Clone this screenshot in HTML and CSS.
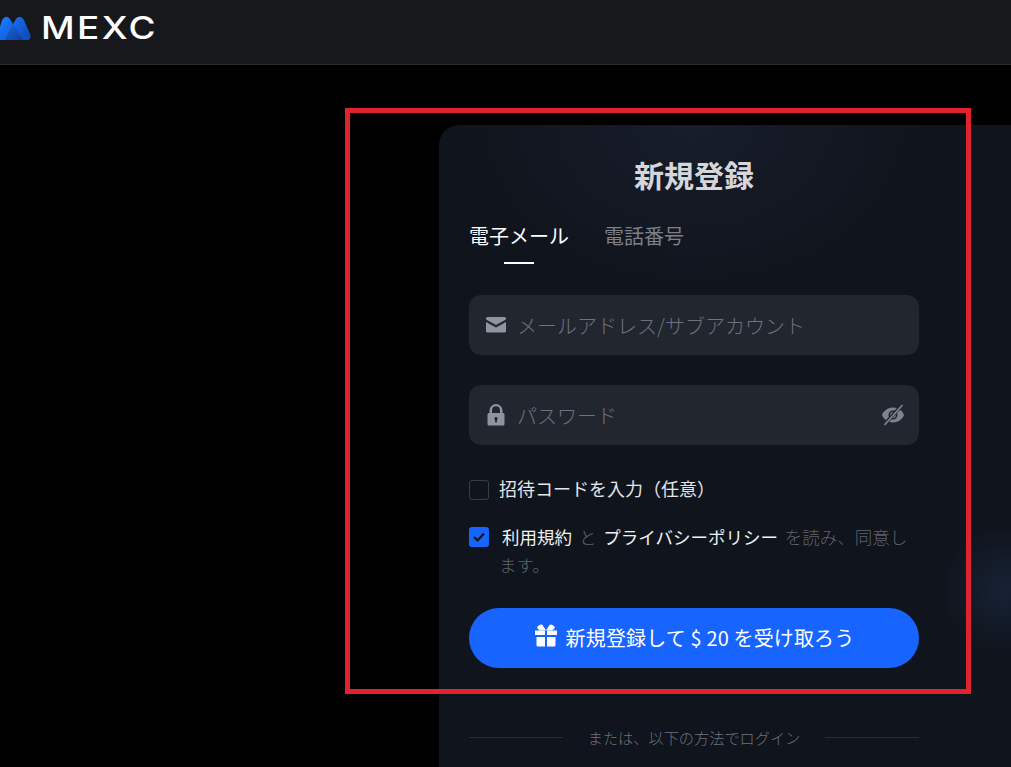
FILE: index.html
```html
<!DOCTYPE html>
<html lang="ja">
<head>
<meta charset="utf-8">
<title>MEXC 新規登録</title>
<link rel="stylesheet" href="styles.css">
</head>
<body>
<header class="topbar">
  <svg class="logo-mark" width="32" height="26" viewBox="0 0 32 26" aria-hidden="true">
    <defs>
      <linearGradient id="lg1" x1="0" y1="0" x2="1" y2="0.6"><stop offset="0" stop-color="#1a86ff"/><stop offset="0.5" stop-color="#1668ea"/><stop offset="1" stop-color="#0f4fc0"/></linearGradient>
      <linearGradient id="lg2" x1="0" y1="0" x2="1" y2="1"><stop offset="0" stop-color="#1a66e0"/><stop offset="1" stop-color="#0c3f9e"/></linearGradient>
    </defs>
    <path d="M-3 25 L3 5 Q7 -1 11 4 L14 9 L17 4 Q21 -1 25 5 L31 19 Q33 25 27 25 Z" fill="url(#lg1)"/>
    <path d="M6 25 L14 9 L24 25 Z" fill="url(#lg2)"/>
  </svg>
  <span class="wordmark">MEXC</span>
</header>

<main class="stage">
  <section class="card">
    <div class="form">
      <h1 class="title">新規登録</h1>
      <nav class="tabs">
        <span class="tab tab-active">電子メール</span>
        <span class="tab">電話番号</span>
      </nav>

      <div class="field field-first">
        <svg class="field-icon" width="20" height="16" viewBox="0 0 20 16" aria-hidden="true">
          <path d="M1.500 0 H18.500 Q20 0 20 1.500 V2.600 L10 8 L0 2.600 V1.500 Q0 0 1.500 0 Z" fill="#8e94a1"/>
          <path d="M0 5 L10 10.400 L20 5 V14 Q20 15.500 18.500 15.500 H1.500 Q0 15.500 0 14 Z" fill="#8e94a1"/>
        </svg>
        <span class="placeholder">メールアドレス/サブアカウント</span>
      </div>

      <div class="field">
        <svg class="field-icon" width="20" height="22" viewBox="0 0 20 22" aria-hidden="true">
          <path fill-rule="evenodd" fill="#8e94a1" d="M3.500 9 V6.500 A6.500 6.500 0 0 1 16.500 6.500 V9 H17 Q18.500 9 18.500 10.500 V20 Q18.500 21.500 17 21.500 H3 Q1.500 21.500 1.500 20 V10.500 Q1.500 9 3 9 Z M6 9 H14 V6.500 A4 4.200 0 0 0 6 6.500 Z M10 13 A1.700 1.700 0 0 0 9.100 16.100 V18.500 H10.900 V16.100 A1.700 1.700 0 0 0 10 13 Z"/>
        </svg>
        <span class="placeholder">パスワード</span>
        <svg class="eye" width="24" height="22" viewBox="0 0 24 22" aria-hidden="true">
          <path fill="#7d838f" d="M12 3.500 C18 3.500 22 8 23 11 C22 14 18 18.500 12 18.500 C6 18.500 2 14 1 11 C2 8 6 3.500 12 3.500 Z"/>
          <circle cx="12" cy="11" r="3.700" fill="none" stroke="#22262f" stroke-width="1.600"/>
          <path d="M3 21 L21 1" stroke="#22262f" stroke-width="3.600"/>
          <path d="M3.500 21 L21.500 1" stroke="#7d838f" stroke-width="1.800"/>
        </svg>
      </div>

      <label class="check-row invite">
        <span class="box"></span>
        <span class="invite-text">招待コードを入力（任意）</span>
      </label>

      <div class="check-row agree">
        <span class="box box-on">
          <svg width="14" height="12" viewBox="0 0 14 12" aria-hidden="true"><path d="M2 6 L5.500 9.500 L12 2.500" fill="none" stroke="#10141c" stroke-width="2.200"/></svg>
        </span>
        <p class="agree-text"><b class="term term-first">利用規約</b> <span>と</span> <b class="term">プライバシーポリシー</b> <span>を読み、同意し</span><br><span>ます。</span></p>
      </div>

      <button class="submit" type="button">
        <svg class="gift" width="24" height="23" viewBox="0 0 24 23" aria-hidden="true">
          <path fill="#fff" d="M1 6.500 H11 V11 H1 Z M13 6.500 H23 V11 H13 Z M2.500 13 H11 V22.500 H4 Q2.500 22.500 2.500 21 Z M13 13 H21.500 V21 Q21.500 22.500 20 22.500 H13 Z"/>
          <path fill="#fff" d="M12 6.500 L8.500 1 Q7.500 0 6 0.700 L3.500 2.500 Q3 3.500 3.500 4.500 L6 6.500 Z M12 6.500 L15.500 1 Q16.500 0 18 0.700 L20.500 2.500 Q21 3.500 20.500 4.500 L18 6.500 Z"/>
        </svg>
        <span class="submit-label">新規登録して $ 20 を受け取ろう</span>
      </button>

      <div class="divider">
        <span class="rule"></span>
        <span class="divider-text">または、以下の方法でログイン</span>
        <span class="rule"></span>
      </div>
    </div>
    <div class="glow"></div>
  </section>
</main>

<div class="highlight"></div>
</body>
</html>
```

FILE: styles.css
```css
* { box-sizing: border-box; }

html, body {
  margin: 0;
  height: 100%;
  overflow: hidden;
  background: #000;
  font-family: "Noto Sans CJK JP", "Noto Sans", sans-serif;
}

.topbar {
  height: 65px;
  display: flex;
  align-items: flex-start;
  gap: 10px;
  padding-top: 15px;
  background: #17181c;
  border-bottom: 1px solid #2a2b2f;
}

.logo-mark { flex: none; margin-left: -1px; }

.wordmark {
  font-family: "Inter", sans-serif;
  font-size: 31px;
  font-weight: 500;
  line-height: 26px;
  letter-spacing: 2px;
  color: #fff;
  transform: scaleX(1.19);
  transform-origin: left center;
}

.stage {
  padding: 60px 0 0 439px;
}

.card {
  position: relative;
  width: 572px;
  height: 642px;
  padding: 29px 0 0 30px;
  border-radius: 20px 0 0 0;
  overflow: hidden;
  background:
    radial-gradient(ellipse 230px 170px at 255px 0, #171d2b 0%, rgba(23, 29, 43, 0) 100%),
    #10141c;
}

.form { position: relative; z-index: 1; width: 450px; }

.title {
  margin: 0;
  font-size: 30px;
  line-height: 40px;
  font-weight: 700;
  text-align: center;
  color: #d4d6db;
}

.tabs {
  display: flex;
  gap: 35px;
  margin-top: 27px;
}

.tab {
  position: relative;
  padding-bottom: 13px;
  font-size: 20px;
  line-height: 30px;
  color: #7b808b;
}

.tab-active { color: #fff; }

.tab-active::after {
  content: "";
  position: absolute;
  left: 35px;
  bottom: 0;
  width: 30px;
  height: 2px;
  background: #fff;
}

.field {
  display: flex;
  align-items: center;
  gap: 11px;
  height: 60px;
  margin-top: 30px;
  padding: 0 14px 0 17px;
  border-radius: 12px;
  background: #22262f;
}

.field-first { margin-top: 31px; }

.placeholder {
  flex: 1;
  padding-top: 2px;
  font-size: 20px;
  font-weight: 300;
  line-height: 30px;
  color: #6d727d;
}

.field-icon { flex: none; }
.eye { flex: none; }

.check-row { display: flex; align-items: flex-start; }

.invite { align-items: center; height: 20px; margin-top: 35px; gap: 10px; }

.box {
  flex: none;
  display: flex;
  align-items: center;
  justify-content: center;
  width: 20px;
  height: 20px;
  border: 1px solid #3a3d44;
  border-radius: 3px;
}

.box-on {
  margin-top: 4px;
  border: 0;
  background: #1764ff;
}

.invite-text {
  padding-bottom: 4px;
  font-size: 18px;
  line-height: 20px;
  color: #e4e5e8;
}

.agree { margin-top: 23px; gap: 10px; }

.agree-text {
  margin: 0;
  font-size: 17.500px;
  line-height: 28px;
  font-weight: 300;
  word-spacing: 3px;
  color: #5f636d;
}

.term {
  font-weight: 400;
  color: #f0f1f3;
}

.term-first { margin-left: 3px; }

.submit {
  display: flex;
  align-items: center;
  justify-content: center;
  gap: 8px;
  width: 100%;
  height: 60px;
  margin-top: 29px;
  border: 0;
  border-radius: 30px;
  background: #1764ff;
  color: #fff;
  font-family: inherit;
  font-size: 20px;
  letter-spacing: 0.15px;
}

.gift { flex: none; margin-bottom: 6px; }

.submit-label { padding-bottom: 2px; }

.divider {
  display: flex;
  align-items: center;
  gap: 25px;
  margin-top: 59px;
}

.rule {
  flex: 1;
  height: 1px;
  background: #262a32;
}

.divider-text {
  font-size: 15.200px;
  font-weight: 300;
  line-height: 20px;
  color: #6d727d;
}

.glow {
  position: absolute;
  left: 500px;
  top: 400px;
  width: 130px;
  height: 130px;
  border-radius: 50%;
  background: radial-gradient(circle, #172234 0%, rgba(23, 34, 52, 0) 70%);
}

.highlight {
  position: absolute;
  left: 345px;
  top: 108px;
  width: 626px;
  height: 586px;
  border: 5px solid #e0232e;
}
```
